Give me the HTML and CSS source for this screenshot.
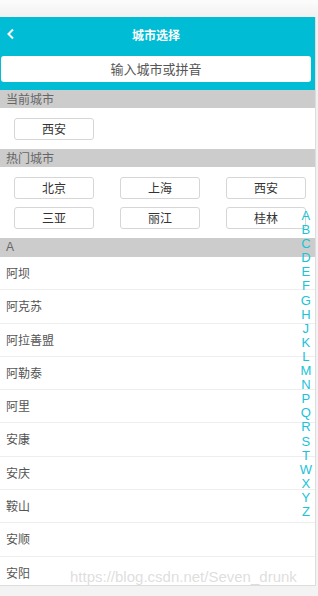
FILE: index.html
```html
<!DOCTYPE html>
<html lang="zh-CN">
<head>
  <meta charset="UTF-8">
  <meta name="viewport" content="width=device-width, initial-scale=1.0">
  <title>城市选择</title>
  <link rel="stylesheet" href="styles.css">
</head>
<body>
  <div class="app">
    <div class="top">
      <div class="nav">
        <svg class="back" width="10" height="12" viewBox="0 0 10 12"><path d="M7 1.5 L2.5 6 L7 10.5" fill="none" stroke="#fff" stroke-width="2"/></svg>
        <span class="title">城市选择</span>
      </div>
      <div class="search">输入城市或拼音</div>
    </div>

    <div class="section">当前城市</div>
    <div class="grid">
      <span class="city">西安</span>
    </div>

    <div class="section">热门城市</div>
    <div class="grid">
      <span class="city">北京</span>
      <span class="city">上海</span>
      <span class="city">西安</span>
      <span class="city">三亚</span>
      <span class="city">丽江</span>
      <span class="city">桂林</span>
    </div>

    <div class="section letter">A</div>
    <ul class="list">
      <li>阿坝</li>
      <li>阿克苏</li>
      <li>阿拉善盟</li>
      <li>阿勒泰</li>
      <li>阿里</li>
      <li>安康</li>
      <li>安庆</li>
      <li>鞍山</li>
      <li>安顺</li>
      <li>安阳</li>
    </ul>

    <div class="index">
      <span>A</span><span>B</span><span>C</span><span>D</span><span>E</span><span>F</span>
      <span>G</span><span>H</span><span>J</span><span>K</span><span>L</span><span>M</span>
      <span>N</span><span>P</span><span>Q</span><span>R</span><span>S</span><span>T</span>
      <span>W</span><span>X</span><span>Y</span><span>Z</span>
    </div>
  </div>
  <div class="watermark">https://blog.csdn.net/Seven_drunk</div>
</body>
</html>
```

FILE: styles.css
```css
body {
  margin: 0;
  padding-top: 17px;
  height: 596px;
  box-sizing: border-box;
  background: linear-gradient(#fcfcfc, #f1f1f1 17px, #f3f3f3);
  font-family: "Liberation Sans", "Noto Sans CJK SC", sans-serif;
  overflow: hidden;
  position: relative;
}
.app {
  position: relative;
  width: 315px;
  height: 568px;
  background: #fff;
  border-right: 1px solid #ddd;
  border-bottom: 1px solid #ddd;
  overflow: hidden;
  font-family: "Noto Sans CJK SC", sans-serif;
}
.top {
  background: #00bcd4;
  padding: 0 4px 8px 1px;
}
.nav {
  height: 34px;
  margin-bottom: 5px;
  display: flex;
  align-items: center;
  justify-content: center;
  position: relative;
}
.back {
  position: absolute;
  left: 5px;
  top: 11px;
}
.title {
  color: #fff;
  font-size: 12px;
  font-weight: bold;
}
.search {
  height: 26px;
  line-height: 26px;
  background: #fff;
  border-radius: 3px;
  text-align: center;
  font-size: 13px;
  color: #555;
}
.section {
  background: #ccc;
  height: 18px;
  line-height: 18px;
  padding-left: 6px;
  font-size: 12px;
  color: #666;
}
.letter {
  height: 19px;
  line-height: 19px;
  font-family: "Liberation Sans", sans-serif;
}
.grid {
  display: grid;
  grid-template-columns: repeat(3, 80px);
  column-gap: 26px;
  row-gap: 8px;
  padding: 10px 14px 9px;
}
.city {
  height: 20px;
  line-height: 20px;
  border: 1px solid #d6d6d6;
  border-radius: 3px;
  text-align: center;
  font-size: 12px;
  color: #333;
}
.list {
  list-style: none;
  margin: 0;
  padding: 0;
}
.list li {
  height: 32.3px;
  line-height: 32px;
  border-bottom: 1px solid #eee;
  padding-left: 6px;
  font-size: 12px;
  color: #555;
}
.index {
  position: absolute;
  right: 3px;
  top: 192px;
  display: flex;
  flex-direction: column;
  align-items: center;
  font-family: "Liberation Sans", sans-serif;
  font-size: 13px;
  line-height: 14.1px;
  color: #19c3d8;
}
.watermark {
  position: absolute;
  left: 70px;
  top: 568px;
  font-family: "Liberation Sans", sans-serif;
  font-size: 15px;
  color: rgba(200, 200, 200, 0.6);
}
```
